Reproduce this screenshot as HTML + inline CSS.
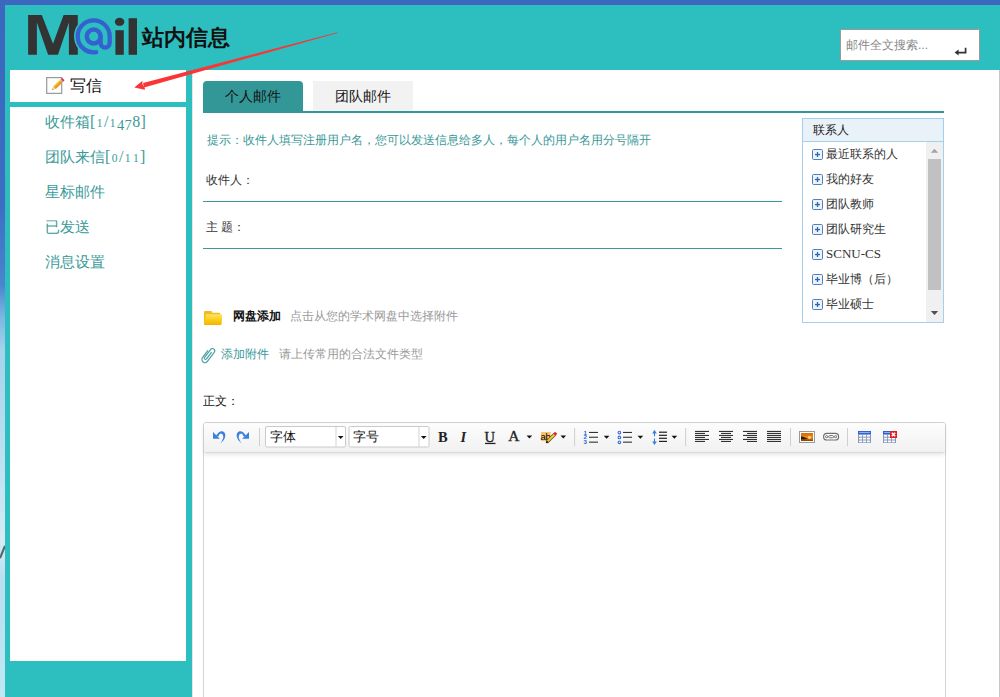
<!DOCTYPE html>
<html><head><meta charset="utf-8">
<style>
*{margin:0;padding:0;box-sizing:border-box;}
html,body{width:1000px;height:697px;overflow:hidden;}
body{position:relative;background:#2dbfbf;font-family:"Liberation Sans",sans-serif;font-size:12px;color:#333;}
.a{position:absolute;white-space:nowrap;}
#topbar{left:0;top:0;width:1000px;height:5px;background:#3b67bf;}
#leftbar{left:0;top:0;width:5px;height:697px;background:linear-gradient(#3b67bf 0px,#3d6cc2 200px,#4a84cf 285px,#7ab4e0 315px,#a6d2ec 350px,#b4dcf0 420px,#cfe8f4 520px,#d6ecf4 540px,#b8def0 580px,#bfe8f4 697px);}
#main{left:192px;top:70px;width:808px;height:627px;background:#fff;border-right:1px solid #c8c8c8;}
#write{left:10px;top:70px;width:176px;height:32px;background:#fff;}
#nav{left:10px;top:107px;width:176px;height:554px;background:#fff;}
.nav{left:45px;font-size:15px;color:#3a9999;line-height:20px;}
.plus{width:11px;height:11px;border:1px solid #9cc3dd;background:#eef5fb;}
.num{font-family:"Liberation Serif",serif;font-size:16px;letter-spacing:0.4px;}
.os{font-size:11.5px;padding:0 1px;}
.od{font-size:14.5px;vertical-align:-3.2px;}
.tab{top:81px;width:100px;height:30px;line-height:30px;text-align:center;font-size:14px;color:#111;}
</style></head><body>
<div class="a" id="topbar"></div>
<div class="a" id="leftbar"></div>
<svg class="a" style="left:0;top:540px" width="5" height="24"><path d="M5,6 L0,18" stroke="#3a4a48" stroke-width="2.2" opacity="0.8"/></svg>
<div class="a" id="main"></div>
<div class="a" style="left:192px;top:70px;width:1px;height:627px;background:#ebe3e3;"></div>
<div class="a" id="write"></div>
<div class="a" id="nav"></div>

<!-- logo -->
<svg class="a" style="left:0;top:0" width="240" height="70">
  <polygon fill="#333" points="28.1,54.7 28.1,15 41.8,15 53,43.7 63.6,15 77.8,15 77.8,54.7 68.9,54.7 68.9,22.6 58,54.7 48.1,54.7 36.9,22.6 36.9,54.7"/>
  <path d="M109.7,36.4 A16,16 0 1 0 96.1,52.2" fill="none" stroke="#2dbfbf" stroke-width="7.5" stroke-linecap="round"/>
  <circle cx="93.7" cy="36.5" r="6.9" fill="none" stroke="#3460d0" stroke-width="4.5"/>
  <path d="M100.6,36.5 L100.6,43 A4.55,4.55 0 0 0 109.7,43 L109.7,36.4 A16,16 0 1 0 96.1,52.2" fill="none" stroke="#3460d0" stroke-width="4.3" stroke-linecap="round"/>
  <ellipse cx="119.6" cy="21.8" rx="4.8" ry="4" fill="#333"/>
  <rect x="115.4" y="30.2" width="8.4" height="24.6" fill="#333"/>
  <rect x="128.6" y="18.2" width="8.4" height="36.6" fill="#333"/>
</svg>
<div class="a" style="left:142px;top:24px;font-size:22px;font-weight:bold;color:#111;line-height:28px;">站内信息</div>

<!-- search -->
<div class="a" style="left:840px;top:29px;width:140px;height:32px;background:#fff;border:1px solid #9a9a9a;"></div>
<div class="a" style="left:846px;top:37px;font-size:12px;color:#888;line-height:16px;">邮件全文搜索...</div>
<svg class="a" style="left:950px;top:44px" width="20" height="14" viewBox="950 44 20 14"><path d="M956.5,52.6 L965.6,52.6 L965.6,47.8" fill="none" stroke="#333" stroke-width="1.7"/><polygon points="954.6,52.6 958.6,49.6 958.6,55.6" fill="#333"/></svg>

<!-- sidebar -->
<svg class="a" style="left:44px;top:75px" width="24" height="22" viewBox="44 75 24 22">
 <rect x="46.7" y="77.6" width="15" height="15.8" fill="#fdfdfd" stroke="#9a9a9a" stroke-width="1.2"/>
 <g transform="rotate(-43.4 57.9 84.4)">
  <rect x="53" y="82.6" width="9.4" height="3.6" fill="#f7b928"/>
  <rect x="53" y="84.4" width="9.4" height="1.8" fill="#e39a10"/>
  <polygon points="53,82.6 53,86.2 50.2,84.4" fill="#f2d3a0"/>
  <polygon points="51.2,83.75 51.2,85.05 50.2,84.4" fill="#333"/>
  <rect x="62.4" y="82.6" width="1.3" height="3.6" fill="#b8b8b8"/>
  <rect x="63.7" y="82.6" width="1.9" height="3.6" rx="0.8" fill="#e8384a"/>
 </g>
</svg>
<div class="a" style="left:70px;top:76px;font-size:16px;color:#111;line-height:20px;">写信</div>
<div class="a nav" style="top:112px;">收件箱<span class="num">[<span class="os">1</span>/<span class="os">1</span><span class="od">4</span><span class="od">7</span>8]</span></div>
<div class="a nav" style="top:147px;">团队来信<span class="num">[<span class="os">0</span>/<span class="os">1</span><span class="os">1</span>]</span></div>
<div class="a nav" style="top:182px;">星标邮件</div>
<div class="a nav" style="top:217px;">已发送</div>
<div class="a nav" style="top:252px;">消息设置</div>

<!-- tabs -->
<div class="a tab" style="left:203px;background:#339797;border-radius:4px 4px 0 0;">个人邮件</div>
<div class="a tab" style="left:313px;background:#f2f2f2;">团队邮件</div>
<div class="a" style="left:203px;top:111px;width:741px;height:2px;background:#339797;"></div>

<div class="a" style="left:207px;top:132px;font-size:12px;color:#3a9999;line-height:16px;">提示：收件人填写注册用户名，您可以发送信息给多人，每个人的用户名用分号隔开</div>
<div class="a" style="left:206px;top:172px;font-size:12px;color:#333;line-height:16px;">收件人：</div>
<div class="a" style="left:203px;top:201px;width:579px;height:1px;background:#3a9999;"></div>
<div class="a" style="left:206px;top:219px;font-size:12px;color:#333;line-height:16px;">主 题：</div>
<div class="a" style="left:203px;top:248px;width:579px;height:1px;background:#3a9999;"></div>

<!-- arrow -->
<svg class="a" style="left:0;top:0" width="400" height="120">
  <polygon fill="#fb3535" points="337.5,32.2 337.5,32.9 144,87.4 143,82.9"/>
  <polygon fill="#fb3535" points="134.3,87.6 142.5,80.8 142.3,84 144.8,88 144.9,89.8"/>
</svg>


<!-- contacts -->
<div class="a" style="left:802px;top:118px;width:142px;height:205px;border:1px solid #a4d0ee;background:#fff;"></div>
<div class="a" style="left:803px;top:119px;width:140px;height:23px;background:#eaf2f9;border-bottom:1px solid #a4d0ee;"></div>
<div class="a" style="left:813px;top:122px;font-size:12px;color:#222;line-height:16px;">联系人</div>
<div class="a" style="left:926px;top:142px;width:17px;height:180px;background:#f0f0f0;"></div>
<div class="a" style="left:928px;top:159px;width:13px;height:131px;background:#c1c1c1;"></div>
<svg class="a" style="left:926px;top:142px" width="17" height="180" viewBox="926 142 17 180">
 <polygon points="930.8,152.8 938.2,152.8 934.5,148.8" fill="#a3a3a3"/>
 <polygon points="930.8,311 938.2,311 934.5,315" fill="#505050"/>
</svg>
<div class="a" style="left:826px;top:146px;font-size:12px;color:#333;line-height:16px;">最近联系的人</div>
<div class="a" style="left:826px;top:171px;font-size:12px;color:#333;line-height:16px;">我的好友</div>
<div class="a" style="left:826px;top:196px;font-size:12px;color:#333;line-height:16px;">团队教师</div>
<div class="a" style="left:826px;top:221px;font-size:12px;color:#333;line-height:16px;">团队研究生</div>
<div class="a" style="left:826px;top:246px;font-size:12px;color:#333;line-height:16px;"><span style="font-family:'Liberation Serif',serif;font-size:13px">SCNU-CS</span></div>
<div class="a" style="left:826px;top:271px;font-size:12px;color:#333;line-height:16px;">毕业博（后）</div>
<div class="a" style="left:826px;top:296px;font-size:12px;color:#333;line-height:16px;">毕业硕士</div>
<svg class="a" style="left:800px;top:140px" width="40" height="180" viewBox="800 140 40 180"><rect x="812.5" y="149.5" width="10" height="10" rx="1.2" fill="#eef3fa" stroke="#4f81c2"/><rect x="815" y="153.9" width="5" height="1.3" fill="#2a66ae"/><rect x="816.85" y="152" width="1.3" height="5" fill="#2a66ae"/><rect x="812.5" y="174.5" width="10" height="10" rx="1.2" fill="#eef3fa" stroke="#4f81c2"/><rect x="815" y="178.9" width="5" height="1.3" fill="#2a66ae"/><rect x="816.85" y="177" width="1.3" height="5" fill="#2a66ae"/><rect x="812.5" y="199.5" width="10" height="10" rx="1.2" fill="#eef3fa" stroke="#4f81c2"/><rect x="815" y="203.9" width="5" height="1.3" fill="#2a66ae"/><rect x="816.85" y="202" width="1.3" height="5" fill="#2a66ae"/><rect x="812.5" y="224.5" width="10" height="10" rx="1.2" fill="#eef3fa" stroke="#4f81c2"/><rect x="815" y="228.9" width="5" height="1.3" fill="#2a66ae"/><rect x="816.85" y="227" width="1.3" height="5" fill="#2a66ae"/><rect x="812.5" y="249.5" width="10" height="10" rx="1.2" fill="#eef3fa" stroke="#4f81c2"/><rect x="815" y="253.9" width="5" height="1.3" fill="#2a66ae"/><rect x="816.85" y="252" width="1.3" height="5" fill="#2a66ae"/><rect x="812.5" y="274.5" width="10" height="10" rx="1.2" fill="#eef3fa" stroke="#4f81c2"/><rect x="815" y="278.9" width="5" height="1.3" fill="#2a66ae"/><rect x="816.85" y="277" width="1.3" height="5" fill="#2a66ae"/><rect x="812.5" y="299.5" width="10" height="10" rx="1.2" fill="#eef3fa" stroke="#4f81c2"/><rect x="815" y="303.9" width="5" height="1.3" fill="#2a66ae"/><rect x="816.85" y="302" width="1.3" height="5" fill="#2a66ae"/></svg>
<!-- attachments -->
<svg class="a" style="left:200px;top:306px" width="26" height="22" viewBox="200 306 26 22">
 <defs><linearGradient id="fg" x1="0" y1="0" x2="0" y2="1"><stop offset="0" stop-color="#ffe27a"/><stop offset="0.45" stop-color="#fdd21a"/><stop offset="1" stop-color="#f2b300"/></linearGradient></defs>
 <path d="M204,311.8 Q204,310.9 205,310.9 L211.4,310.9 L212.4,312.8 L219.3,312.8 Q220.2,312.8 220.2,313.8 L220.2,325 L204,325 Z" fill="#f4bb1a"/>
 <path d="M205.8,315 Q205.8,314.2 206.8,314.2 L221,314.2 Q222.2,314.2 222.2,315.5 L221.6,324 Q221.5,325 220.5,325 L204.6,325 Z" fill="url(#fg)"/>
</svg>
<div class="a" style="left:233px;top:308px;font-size:12px;font-weight:bold;color:#111;line-height:16px;">网盘添加</div>
<div class="a" style="left:290px;top:308px;font-size:12px;color:#999;line-height:16px;">点击从您的学术网盘中选择附件</div>
<svg class="a" style="left:198px;top:344px" width="22" height="22" viewBox="198 344 22 22">
 <g transform="translate(208.2,355.2) rotate(37) scale(1.1) translate(-2.8,-8)">
  <path d="M3.6,4.2 V11.6 A1.1,1.1 0 0 1 1.4,11.6 V2.6 A2.1,2.1 0 0 1 5.6,2.6 V12.9 A2.8,2.8 0 0 1 0,12.9 V5" fill="none" stroke="#4a9fa2" stroke-width="1.05" stroke-linecap="round"/>
 </g>
</svg>
<div class="a" style="left:221px;top:346px;font-size:12px;color:#3a9999;line-height:16px;">添加附件</div>
<div class="a" style="left:279px;top:346px;font-size:12px;color:#999;line-height:16px;">请上传常用的合法文件类型</div>
<div class="a" style="left:203px;top:393px;font-size:12px;color:#111;line-height:16px;">正文：</div>

<!-- editor -->
<div class="a" style="left:203px;top:422px;width:743px;height:290px;border:1px solid #d4d4d4;border-radius:3px;background:#fff;"></div>
<div class="a" style="left:204px;top:423px;width:741px;height:30px;background:linear-gradient(#fdfdfd,#f1f1f1);border-bottom:1px solid #dadada;box-shadow:0 2px 4px rgba(0,0,0,0.10);border-radius:2px 2px 2px 2px;"></div>
<svg class="a" style="left:200px;top:420px" width="760" height="40" viewBox="200 420 760 40"><polygon points="213,432 213,438.8 219.8,438.8" fill="#3b82d8"/>
<path d="M215.5,436.5 Q219,430.5 222.5,431.2 Q226,432.5 225.2,437 Q224.5,440.5 220.2,443.8 Q223.5,439 223.3,436.5 Q223,433.8 220.8,433.6 Q219.5,433.6 218.3,436.5 Z" fill="#3b82d8"/>
<g transform="translate(462,0) scale(-1,1)"><polygon points="213,432 213,438.8 219.8,438.8" fill="#3b82d8"/><path d="M215.5,436.5 Q219,430.5 222.5,431.2 Q226,432.5 225.2,437 Q224.5,440.5 220.2,443.8 Q223.5,439 223.3,436.5 Q223,433.8 220.8,433.6 Q219.5,433.6 218.3,436.5 Z" fill="#3b82d8"/></g>
<rect x="259.0" y="428" width="1" height="18" fill="#cfcfcf"/>
<rect x="265.5" y="426.5" width="80" height="20.5" rx="1.5" fill="#fff" stroke="#cacaca"/>
<rect x="335.5" y="427" width="1" height="20" fill="#d4d4d4"/>
<polygon points="337.9,436.0 343.5,436.0 340.7,439.0" fill="#111"/>
<rect x="349.0" y="426.5" width="80" height="20.5" rx="1.5" fill="#fff" stroke="#cacaca"/>
<rect x="418.5" y="427" width="1" height="20" fill="#d4d4d4"/>
<polygon points="420.9,436.0 426.5,436.0 423.7,439.0" fill="#111"/>
<text x="438" y="441.8" font-family="Liberation Serif" font-weight="bold" font-size="14.5" fill="#222">B</text>
<text x="460.6" y="441.8" font-family="Liberation Serif" font-style="italic" font-weight="bold" font-size="14.5" fill="#222">I</text>
<text x="484.6" y="441.8" font-family="Liberation Serif" font-size="14.5" fill="#222" stroke="#222" stroke-width="0.35">U</text>
<rect x="485" y="442.8" width="10.5" height="1.3" fill="#222"/>
<text x="508.3" y="441" font-family="Liberation Serif" font-size="15.5" fill="#222" stroke="#222" stroke-width="0.3">A</text>
<polygon points="526.6,435.5 532.1999999999999,435.5 529.4,438.5" fill="#111"/>
<rect x="541" y="432" width="9.7" height="9" fill="#fbc46c"/>
<text x="540.6" y="439.6" font-family="Liberation Sans" font-size="9.5" fill="#000">a</text>
<text x="545.4" y="439.6" font-family="Liberation Sans" font-size="9.5" fill="#000">b</text>
<line x1="547" y1="442" x2="555" y2="434" stroke="#6a5020" stroke-width="3.2"/>
<line x1="547.3" y1="441.7" x2="555" y2="434" stroke="#f0cc40" stroke-width="1.8"/>
<line x1="546.3" y1="442.7" x2="547.6" y2="441.4" stroke="#111" stroke-width="2"/>
<line x1="554.3" y1="434.7" x2="556.2" y2="432.8" stroke="#e82030" stroke-width="3"/>
<polygon points="560.5,435.5 566.0999999999999,435.5 563.3,438.5" fill="#111"/>
<rect x="574.1" y="428" width="1" height="18" fill="#cfcfcf"/>
<rect x="589" y="431.90000000000003" width="9" height="1.1" fill="#333"/>
<rect x="589" y="436.7" width="9" height="1.1" fill="#333"/>
<rect x="589" y="441.6" width="9" height="1.1" fill="#333"/>
<text x="583.3" y="446" font-family="Liberation Sans" font-weight="bold" font-size="6.2" fill="#2f62e0"><tspan x="583.6" y="434.6">1</tspan><tspan x="583.6" y="439.4">2</tspan><tspan x="583.6" y="444.2">3</tspan></text>
<polygon points="603.8000000000001,435.8 609.4,435.8 606.6,438.8" fill="#111"/>
<rect x="623" y="431.90000000000003" width="9" height="1.1" fill="#333"/>
<circle cx="619.4" cy="432.6" r="1.3" fill="none" stroke="#3b6fe0" stroke-width="1.1"/>
<rect x="623" y="436.7" width="9" height="1.1" fill="#333"/>
<circle cx="619.4" cy="437.4" r="1.3" fill="none" stroke="#3b6fe0" stroke-width="1.1"/>
<rect x="623" y="441.6" width="9" height="1.1" fill="#333"/>
<circle cx="619.4" cy="442.3" r="1.3" fill="none" stroke="#3b6fe0" stroke-width="1.1"/>
<polygon points="637.6,435.8 643.1999999999999,435.8 640.4,438.8" fill="#111"/>
<path d="M654.5,432 L654.5,436.3 M654.5,438.5 L654.5,443" stroke="#3b7ee0" stroke-width="1.1"/><polygon points="652.2,433.4 654.5,429.8 656.8,433.4" fill="#3b7ee0"/><polygon points="652.2,441.4 654.5,445 656.8,441.4" fill="#3b7ee0"/>
<rect x="659" y="431.6" width="8" height="1.2" fill="#222"/>
<rect x="659" y="434.7" width="8" height="1.2" fill="#222"/>
<rect x="659" y="437.7" width="8" height="1.2" fill="#222"/>
<rect x="659" y="440.8" width="8" height="1.2" fill="#222"/>
<polygon points="671.6,435.8 677.1999999999999,435.8 674.4,438.8" fill="#111"/>
<rect x="685.1" y="428" width="1" height="18" fill="#cfcfcf"/>
<rect x="695" y="430.9" width="14" height="1.1" fill="#333"/>
<rect x="695" y="432.9" width="10" height="1.1" fill="#333"/>
<rect x="695" y="434.9" width="14" height="1.1" fill="#333"/>
<rect x="695" y="436.9" width="10" height="1.1" fill="#333"/>
<rect x="695" y="438.9" width="14" height="1.1" fill="#333"/>
<rect x="695" y="440.9" width="10" height="1.1" fill="#333"/>
<rect x="719" y="430.9" width="14" height="1.1" fill="#333"/>
<rect x="721" y="432.9" width="10" height="1.1" fill="#333"/>
<rect x="719" y="434.9" width="14" height="1.1" fill="#333"/>
<rect x="721" y="436.9" width="10" height="1.1" fill="#333"/>
<rect x="719" y="438.9" width="14" height="1.1" fill="#333"/>
<rect x="721" y="440.9" width="10" height="1.1" fill="#333"/>
<rect x="743" y="430.9" width="14" height="1.1" fill="#333"/>
<rect x="747" y="432.9" width="10" height="1.1" fill="#333"/>
<rect x="743" y="434.9" width="14" height="1.1" fill="#333"/>
<rect x="747" y="436.9" width="10" height="1.1" fill="#333"/>
<rect x="743" y="438.9" width="14" height="1.1" fill="#333"/>
<rect x="747" y="440.9" width="10" height="1.1" fill="#333"/>
<rect x="767" y="430.9" width="14" height="1.1" fill="#333"/>
<rect x="767" y="432.9" width="14" height="1.1" fill="#333"/>
<rect x="767" y="434.9" width="14" height="1.1" fill="#333"/>
<rect x="767" y="436.9" width="14" height="1.1" fill="#333"/>
<rect x="767" y="438.9" width="14" height="1.1" fill="#333"/>
<rect x="767" y="440.9" width="14" height="1.1" fill="#333"/>
<rect x="790.0" y="428" width="1" height="18" fill="#cfcfcf"/>
<rect x="799.5" y="431.5" width="15" height="11" fill="#fff" stroke="#9a9a9a"/>
<defs><linearGradient id="ig" x1="0" y1="0" x2="0" y2="1"><stop offset="0" stop-color="#d86a08"/><stop offset="0.6" stop-color="#e88a20"/><stop offset="1" stop-color="#8a3a04"/></linearGradient></defs>
<rect x="801" y="433" width="12" height="8" fill="url(#ig)"/>
<circle cx="809.5" cy="437.3" r="1.6" fill="#ffd860"/>
<path d="M801,436.2 Q804,436.8 808,439 L801,439.5 Z" fill="#2a1a10"/>
<rect x="823.6" y="433.4" width="15" height="6.6" rx="3.3" fill="#fff" stroke="#707070" stroke-width="1.2"/><circle cx="826.6" cy="436.7" r="1.1" fill="#fff" stroke="#606060" stroke-width="0.9"/><circle cx="835.6" cy="436.7" r="1.1" fill="#fff" stroke="#606060" stroke-width="0.9"/><rect x="828.6" y="435.6" width="5" height="2.2" rx="1.1" fill="#fff" stroke="#606060" stroke-width="0.9"/>
<rect x="847.0" y="428" width="1" height="18" fill="#cfcfcf"/>
<rect x="858" y="431" width="13" height="12" fill="#8598bb"/><rect x="858" y="431" width="13" height="3" fill="#2d62de"/><rect x="859.2" y="432" width="10.6" height="1" fill="#8fb0f0"/><rect x="859.1" y="434.9" width="3" height="1.8" fill="#fff"/><rect x="859.1" y="437.7" width="3" height="1.8" fill="#fff"/><rect x="859.1" y="440.5" width="3" height="1.8" fill="#fff"/><rect x="863.0" y="434.9" width="3" height="1.8" fill="#fff"/><rect x="863.0" y="437.7" width="3" height="1.8" fill="#fff"/><rect x="863.0" y="440.5" width="3" height="1.8" fill="#fff"/><rect x="866.9" y="434.9" width="3" height="1.8" fill="#fff"/><rect x="866.9" y="437.7" width="3" height="1.8" fill="#fff"/><rect x="866.9" y="440.5" width="3" height="1.8" fill="#fff"/><rect x="883" y="431" width="13" height="12" fill="#8598bb"/><rect x="883" y="431" width="13" height="3" fill="#2d62de"/><rect x="884.2" y="432" width="10.6" height="1" fill="#8fb0f0"/><rect x="884.1" y="434.9" width="3" height="1.8" fill="#fff"/><rect x="884.1" y="437.7" width="3" height="1.8" fill="#fff"/><rect x="884.1" y="440.5" width="3" height="1.8" fill="#fff"/><rect x="888.0" y="434.9" width="3" height="1.8" fill="#fff"/><rect x="888.0" y="437.7" width="3" height="1.8" fill="#fff"/><rect x="888.0" y="440.5" width="3" height="1.8" fill="#fff"/><rect x="891.9" y="434.9" width="3" height="1.8" fill="#fff"/><rect x="891.9" y="437.7" width="3" height="1.8" fill="#fff"/><rect x="891.9" y="440.5" width="3" height="1.8" fill="#fff"/><rect x="890" y="431" width="7" height="7" fill="#e01c1c"/><path d="M891.8,432.8 L895.2,436.2 M895.2,432.8 L891.8,436.2" stroke="#fff" stroke-width="1.5"/></svg>
<div class="a" style="left:270px;top:429px;font-size:13px;color:#111;line-height:16px;">字体</div>
<div class="a" style="left:353px;top:429px;font-size:13px;color:#111;line-height:16px;">字号</div>
</body></html>
